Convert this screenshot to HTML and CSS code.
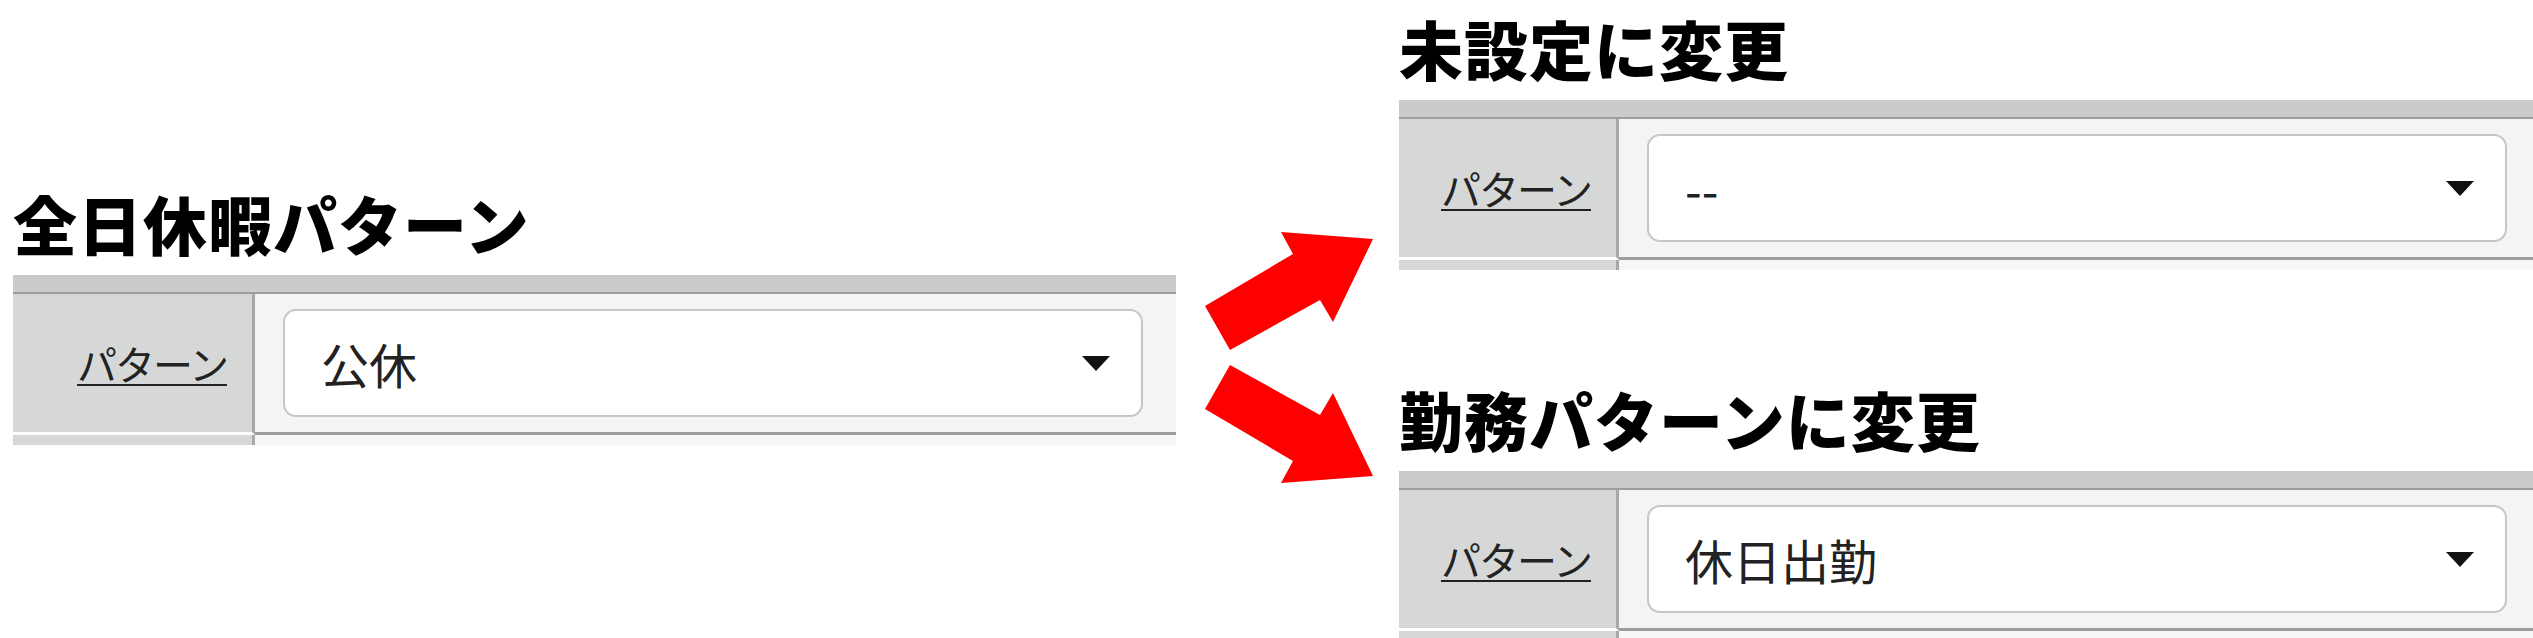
FILE: index.html
```html
<!DOCTYPE html>
<html lang="ja">
<head>
    <meta charset="UTF-8">
    <meta name="viewport" content="width=device-width, initial-scale=1.0">
    <title>パターン変更</title>
    <link rel="stylesheet" href="styles.css">
</head>
<body>
    <!-- 変更前 -->
    <section class="panel panel-before">
        <h2>全日休暇パターン</h2>
        <div class="sheet">
            <div class="sheet-top"></div>
            <div class="sheet-row">
                <div class="sheet-label"><a href="#">パターン</a></div>
                <div class="sheet-value">
                    <div class="select">
                        <span class="select-text">公休</span>
                        <span class="select-arrow"></span>
                    </div>
                </div>
            </div>
            <div class="sheet-row stub">
                <div class="sheet-label"></div>
                <div class="sheet-value"></div>
            </div>
        </div>
    </section>

    <!-- 矢印 -->
    <div class="arrows">
        <svg width="223" height="638" viewBox="0 0 223 638">
            <polygon points="29,306 117,254 105,232 197,239 157,322 144,300 54,350" fill="#ff0000"/>
            <polygon points="29,409 117,461 105,483 197,476 157,393 144,415 54,365" fill="#ff0000"/>
        </svg>
    </div>

    <!-- 変更後 -->
    <div class="after">
        <section class="panel">
            <h2>未設定に変更</h2>
            <div class="sheet">
                <div class="sheet-top"></div>
                <div class="sheet-row">
                    <div class="sheet-label"><a href="#">パターン</a></div>
                    <div class="sheet-value">
                        <div class="select">
                            <span class="select-text">--</span>
                            <span class="select-arrow"></span>
                        </div>
                    </div>
                </div>
                <div class="sheet-row stub">
                    <div class="sheet-label"></div>
                    <div class="sheet-value"></div>
                </div>
            </div>
        </section>

        <section class="panel panel-second">
            <h2>勤務パターンに変更</h2>
            <div class="sheet">
                <div class="sheet-top"></div>
                <div class="sheet-row">
                    <div class="sheet-label"><a href="#">パターン</a></div>
                    <div class="sheet-value">
                        <div class="select">
                            <span class="select-text">休日出勤</span>
                            <span class="select-arrow"></span>
                        </div>
                    </div>
                </div>
                <div class="sheet-row stub">
                    <div class="sheet-label"></div>
                    <div class="sheet-value"></div>
                </div>
            </div>
        </section>
    </div>
</body>
</html>
```

FILE: styles.css
```css
body {
    margin: 0;
    padding: 0;
    height: 638px;
    overflow: hidden;
    display: flex;
    background-color: #ffffff;
    font-family: "Noto Sans CJK JP", "Noto Sans", sans-serif;
    color: #222222;
}
h2 {
    margin: 0 0 22px 0;
    font-size: 64px;
    line-height: 62px;
    letter-spacing: 1px;
    font-weight: 900;
    color: #000000;
}
.panel-before {
    width: 1163px;
    padding: 191px 0 0 13px;
}
.arrows {
    width: 223px;
    flex-shrink: 0;
}
.arrows svg {
    display: block;
}
.after {
    flex: 1;
    padding-top: 16px;
    min-width: 0;
}
.panel-second {
    margin-top: 117px;
}
.sheet-top {
    height: 17px;
    background-color: #cbcbcb;
    border-bottom: 2px solid #9d9d9d;
}
.sheet-row {
    display: flex;
}
.sheet-label {
    width: 214px;
    padding-right: 25px;
    background-color: #d6d8d8;
    border-right: 3px solid #a8a8a8;
    border-bottom: 3px solid #ffffff;
    display: flex;
    align-items: center;
    justify-content: flex-end;
}
.after .sheet-label {
    width: 192px;
}
.sheet-label a {
    font-size: 40px;
    letter-spacing: -2px;
    color: #222222;
    text-decoration: underline;
    text-decoration-thickness: 2px;
    text-underline-offset: 4px;
}
.sheet-value {
    flex: 1;
    padding: 15px 33px 15px 28px;
    background-color: #f4f4f4;
    border-bottom: 3px solid #9d9d9d;
}
.after .sheet-value {
    padding-right: 26px;
}
.sheet-row.stub {
    height: 10px;
}
.sheet-row.stub .sheet-label,
.sheet-row.stub .sheet-value {
    border-bottom: none;
    padding-top: 0;
    padding-bottom: 0;
}
.sheet-row.stub .sheet-value {
    background-color: #f7f7f7;
}
.select {
    height: 104px;
    box-sizing: content-box;
    background-color: #ffffff;
    border: 2px solid #c6c6c6;
    border-radius: 13px;
    display: flex;
    align-items: center;
    padding: 0 31px 0 36px;
}
.select-text {
    font-size: 48px;
    color: #222222;
}
.select-arrow {
    margin-left: auto;
    width: 0;
    height: 0;
    border-left: 14px solid transparent;
    border-right: 14px solid transparent;
    border-top: 15px solid #111111;
}
```
